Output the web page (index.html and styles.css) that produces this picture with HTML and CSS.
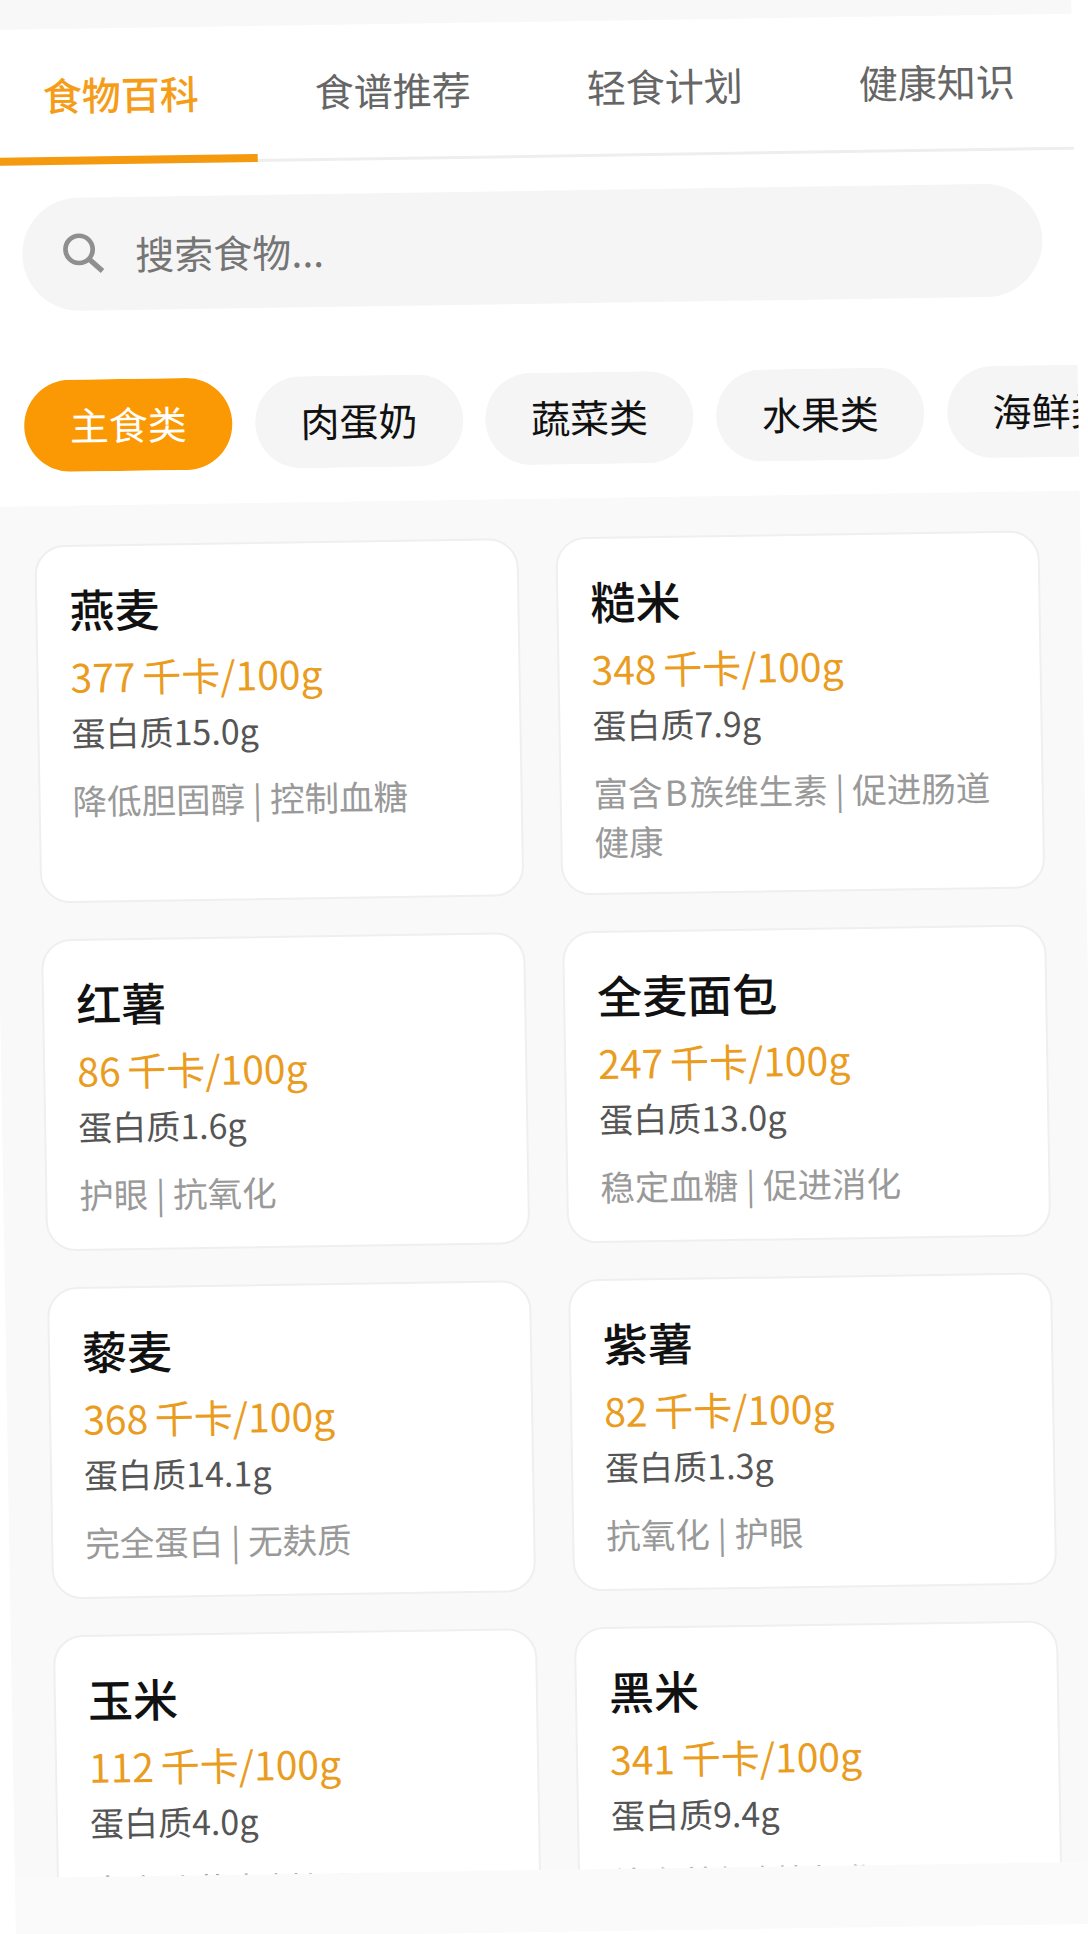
FILE: index.html
```html
<!DOCTYPE html>
<html lang="zh">
<head>
<meta charset="utf-8">
<title>食物百科</title>
<link rel="stylesheet" href="styles.css">
</head>
<body>
<div class="page">
  <div class="statusbar"></div>
  <nav class="tabs">
    <div class="tab active">食物百科</div>
    <div class="tab">食谱推荐</div>
    <div class="tab">轻食计划</div>
    <div class="tab">健康知识</div>
  </nav>
  <div class="search">
    <svg class="search-icon" viewBox="0 0 42 42" width="44" height="44" aria-hidden="true">
      <circle cx="17" cy="16" r="13" fill="none" stroke="#8f8f8f" stroke-width="4.5"/>
      <path d="M26.5 25.5 L39 37" fill="none" stroke="#8f8f8f" stroke-width="5"/>
    </svg>
    <span class="search-text">搜索食物...</span>
  </div>
  <div class="chips">
    <div class="chip active">主食类</div>
    <div class="chip">肉蛋奶</div>
    <div class="chip">蔬菜类</div>
    <div class="chip">水果类</div>
    <div class="chip">海鲜类</div>
  </div>
  <main class="content">
    <div class="grid">
      <article class="card">
        <h3 class="name">燕麦</h3>
        <p class="kcal">377 千卡/100g</p>
        <p class="protein">蛋白质15.0g</p>
        <p class="benefit">降低胆固醇 | 控制血糖</p>
      </article>
      <article class="card">
        <h3 class="name">糙米</h3>
        <p class="kcal">348 千卡/100g</p>
        <p class="protein">蛋白质7.9g</p>
        <p class="benefit">富含&#8202;B&#8202;族维生素 | 促进肠道健康</p>
      </article>
      <article class="card">
        <h3 class="name">红薯</h3>
        <p class="kcal">86 千卡/100g</p>
        <p class="protein">蛋白质1.6g</p>
        <p class="benefit">护眼 | 抗氧化</p>
      </article>
      <article class="card">
        <h3 class="name">全麦面包</h3>
        <p class="kcal">247 千卡/100g</p>
        <p class="protein">蛋白质13.0g</p>
        <p class="benefit">稳定血糖 | 促进消化</p>
      </article>
      <article class="card">
        <h3 class="name">藜麦</h3>
        <p class="kcal">368 千卡/100g</p>
        <p class="protein">蛋白质14.1g</p>
        <p class="benefit">完全蛋白 | 无麸质</p>
      </article>
      <article class="card">
        <h3 class="name">紫薯</h3>
        <p class="kcal">82 千卡/100g</p>
        <p class="protein">蛋白质1.3g</p>
        <p class="benefit">抗氧化 | 护眼</p>
      </article>
      <article class="card">
        <h3 class="name">玉米</h3>
        <p class="kcal">112 千卡/100g</p>
        <p class="protein">蛋白质4.0g</p>
        <p class="benefit">富含叶黄素 | 护眼</p>
      </article>
      <article class="card">
        <h3 class="name">黑米</h3>
        <p class="kcal">341 千卡/100g</p>
        <p class="protein">蛋白质9.4g</p>
        <p class="benefit">补血养颜 | 抗氧化</p>
      </article>
    </div>
  </main>
  <div class="bottom"></div>
</div>
</body>
</html>
```

FILE: styles.css
```css
* { box-sizing: border-box; }
html, body { margin: 0; padding: 0; background: #fff; overflow: hidden; }
body { width: 1088px; height: 1934px; }

.page {
  width: 1088px;
  height: 1940px;
  background: #fff;
  font-family: "Noto Sans CJK SC", "Noto Sans", sans-serif;
  transform-origin: 0 0;
  transform: matrix(1, -0.015, 0.017, 1, -17, 0);
}

.statusbar { height: 30px; background: #f8f8f8; }

.tabs {
  display: grid;
  grid-template-columns: repeat(4, 272px);
  height: 136px;
  border-bottom: 3px solid #eeeeee;
}
.tab {
  display: flex;
  align-items: center;
  justify-content: center;
  height: 136px;
  padding-top: 1px;
  border-bottom: 8px solid transparent;
  font-size: 39px;
  color: #666;
}
.tab.active { color: #f59d19; font-weight: 500; border-bottom-color: #f59a0e; }

.search {
  display: flex;
  align-items: center;
  width: 1020px;
  height: 113px;
  margin: 33px 0 0 35px;
  padding-left: 39px;
  border-radius: 57px;
  background: #f5f5f6;
}
.search-icon { flex: none; }
.search-text { margin-left: 30px; font-size: 39px; color: #757575; line-height: 1; }

.chips {
  display: flex;
  gap: 22.7px;
  margin-top: 69px;
  padding-left: 34px;
  overflow: hidden;
}
.chip {
  flex: none;
  width: 208px;
  height: 92px;
  padding-bottom: 5px;
  border-radius: 46px;
  background: #f5f5f5;
  display: flex;
  align-items: center;
  justify-content: center;
  font-size: 39px;
  color: #111;
}
.chip.active { background: #fb9905; color: #fff; }

.content {
  height: 1371px;
  margin-top: 34px;
  padding: 39px 40px 0 42px;
  background: #f9f9f9;
  overflow: hidden;
}
.grid {
  display: grid;
  grid-template-columns: repeat(2, 484px);
  grid-template-rows: 358px;
  grid-auto-rows: auto;
  gap: 36px 37px;
}
.card {
  padding: 34px 30px 30px 32px;
  border: 2px solid #efefef;
  border-radius: 30px;
  background: #fff;
}
.name { margin: 0; font-size: 45px; line-height: 56px; font-weight: 500; color: #111; }
.kcal { margin: 14px 0 0; font-size: 39px; word-spacing: -2px; line-height: 50px; color: #e99c1e; }
.protein { margin: 10px 0 0; font-size: 34px; line-height: 44px; color: #555; }
.benefit { margin: 21px 0 0; font-size: 34.5px; line-height: 49px; color: #999; }

.bottom { height: 62px; background: #fafafa; }
```
